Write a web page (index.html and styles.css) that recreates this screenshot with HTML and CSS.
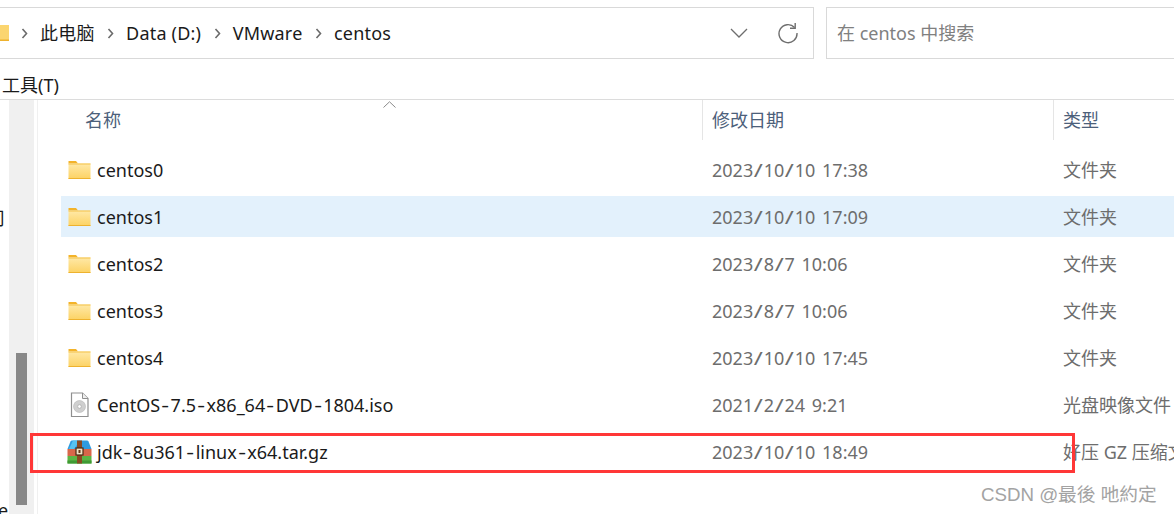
FILE: index.html
```html
<!DOCTYPE html>
<html lang="zh-CN">
<head>
  <meta charset="UTF-8">
  <title>centos</title>
  <link rel="stylesheet" href="styles.css">
</head>
<body>
  <div class="toolbar">
    <div class="address">
      <svg class="address-folder" width="12" height="16" viewBox="0 0 12 16"><rect x="-8" y="0" width="19" height="16" fill="#fbd56f"/><rect x="-8" y="14.5" width="19" height="1.5" fill="#eeb22e"/></svg>
      <svg class="crumb-sep" width="7" height="11" viewBox="0 0 7 11"><path d="M1.5 1 L5.5 5.5 L1.5 10" fill="none" stroke="#6b6b6b" stroke-width="1.6"/></svg>
      <span class="crumb">此电脑</span>
      <svg class="crumb-sep" width="7" height="11" viewBox="0 0 7 11"><path d="M1.5 1 L5.5 5.5 L1.5 10" fill="none" stroke="#6b6b6b" stroke-width="1.6"/></svg>
      <span class="crumb">Data (D:)</span>
      <svg class="crumb-sep" width="7" height="11" viewBox="0 0 7 11"><path d="M1.5 1 L5.5 5.5 L1.5 10" fill="none" stroke="#6b6b6b" stroke-width="1.6"/></svg>
      <span class="crumb">VMware</span>
      <svg class="crumb-sep" width="7" height="11" viewBox="0 0 7 11"><path d="M1.5 1 L5.5 5.5 L1.5 10" fill="none" stroke="#6b6b6b" stroke-width="1.6"/></svg>
      <span class="crumb">centos</span>
      <div class="address-actions">
        <svg width="18" height="10" viewBox="0 0 18 10"><path d="M1 1 L9 9 L17 1" fill="none" stroke="#6e6e6e" stroke-width="1.3"/></svg>
        <svg width="22" height="22" viewBox="0 0 22 22"><path d="M17.6 5.5 A9 9 0 1 0 20 11" fill="none" stroke="#6e6e6e" stroke-width="1.4"/><path d="M18.2 1 V6.2 H13" fill="none" stroke="#6e6e6e" stroke-width="1.4"/></svg>
      </div>
    </div>
    <div class="search">在 centos 中搜索</div>
  </div>

  <div class="menu">工具(T)</div>

  <div class="main">
    <div class="sidebar">
      <div class="side-strip">
        <div class="side-thumb"></div>
      </div>
      <span class="side-clip side-clip-top">司</span>
      <span class="side-clip side-clip-bottom">re</span>
    </div>

    <div class="list">
      <div class="list-head">
        <span class="head-name">名称</span>
        <span class="head-cell">修改日期</span>
        <span class="head-cell">类型</span>
        <svg class="sort-arrow" width="13" height="7" viewBox="0 0 13 7"><path d="M0.5 6.5 L6.5 0.8 L12.5 6.5" fill="none" stroke="#8a8a8a" stroke-width="1"/></svg>
      </div>

      <div class="row">
        <svg class="icon" width="23" height="18" viewBox="0 0 23 18"><use href="#folder"/></svg>
        <span class="name">centos0</span><span class="date">2023<i>/</i>10<i>/</i>10 17:38</span><span class="type">文件夹</span>
      </div>
      <div class="row row-active">
        <svg class="icon" width="23" height="18" viewBox="0 0 23 18"><use href="#folder"/></svg>
        <span class="name">centos1</span><span class="date">2023<i>/</i>10<i>/</i>10 17:09</span><span class="type">文件夹</span>
      </div>
      <div class="row">
        <svg class="icon" width="23" height="18" viewBox="0 0 23 18"><use href="#folder"/></svg>
        <span class="name">centos2</span><span class="date">2023<i>/</i>8<i>/</i>7 10:06</span><span class="type">文件夹</span>
      </div>
      <div class="row">
        <svg class="icon" width="23" height="18" viewBox="0 0 23 18"><use href="#folder"/></svg>
        <span class="name">centos3</span><span class="date">2023<i>/</i>8<i>/</i>7 10:06</span><span class="type">文件夹</span>
      </div>
      <div class="row">
        <svg class="icon" width="23" height="18" viewBox="0 0 23 18"><use href="#folder"/></svg>
        <span class="name">centos4</span><span class="date">2023<i>/</i>10<i>/</i>10 17:45</span><span class="type">文件夹</span>
      </div>
      <div class="row">
        <svg class="icon" width="23" height="26" viewBox="0 0 23 26">
          <path d="M3.5 1 H14.5 L20 6.5 V24.5 H3.5 Z" fill="#fff" stroke="#8f8f8f" stroke-width="1.2"/>
          <path d="M14.5 1 V6.5 H20" fill="#eee" stroke="#8f8f8f" stroke-width="1"/>
          <circle cx="11.5" cy="14.5" r="6" fill="#cfcfcf" stroke="#b5b5b5" stroke-width="0.6"/>
          <circle cx="11.5" cy="14.5" r="1.8" fill="#fff" stroke="#a0a0a0" stroke-width="0.6"/>
        </svg>
        <span class="name">CentOS<i>-</i>7.5<i>-</i>x86_64<i>-</i>DVD<i>-</i>1804.iso</span><span class="date">2021<i>/</i>2<i>/</i>24 9:21</span><span class="type">光盘映像文件</span>
      </div>
      <div class="row">
        <svg class="icon icon-zip" width="25" height="24" viewBox="0 0 25 24">
          <path d="M5 0.5 H20 Q21 0.5 21.500 1.500 L24.500 9 H0.500 L3.500 1.500 Q4 0.5 5 0.5 Z" fill="#2f9be0"/>
          <path d="M6 0.500 H13 L7 9 H2 Z" fill="#57c3f0"/>
          <rect x="0.500" y="9" width="24" height="7" fill="#d9674a"/>
          <rect x="0.500" y="16" width="24" height="7.500" fill="#5cb544"/>
          <rect x="0.500" y="20.500" width="24" height="3" fill="#3f9a34"/>
          <rect x="10" y="0.500" width="5" height="23" fill="#8a4a22"/>
          <rect x="9" y="8" width="7" height="7" fill="#f1e3c8" stroke="#4a2a12" stroke-width="1.200"/>
          <rect x="11.500" y="10" width="2" height="3" fill="#6b3a18"/>
        </svg>
        <span class="name">jdk<i>-</i>8u361<i>-</i>linux<i>-</i>x64.tar.gz</span><span class="date">2023<i>/</i>10<i>/</i>10 18:49</span><span class="type">好压 GZ 压缩文件</span>
      </div>
    </div>
  </div>

  <div class="red-mark"></div>
  <div class="watermark">CSDN @最後 吔約定</div>

  <svg class="defs" width="0" height="0">
    <defs>
      <linearGradient id="folderFill" x1="0" y1="0" x2="0" y2="1">
        <stop offset="0" stop-color="#ffe9a8"/>
        <stop offset="1" stop-color="#fcd263"/>
      </linearGradient>
      <g id="folder">
        <path d="M0.500 0 H8 L10 2.500 H0.500 Z" fill="#f3b32a"/>
        <rect x="0.500" y="2.500" width="22" height="15.500" fill="url(#folderFill)"/>
        <rect x="0.500" y="2.500" width="22" height="1" fill="#f3c14a"/>
        <rect x="0.500" y="17" width="22" height="1" fill="#eeb22e"/>
      </g>
    </defs>
  </svg>
</body>
</html>
```

FILE: styles.css
```css
html, body {
  height: 514px;
}
body {
  position: relative;
  margin: 0;
  overflow: hidden;
  background-color: #fff;
  color: #1a1a1a;
  font-family: "Noto Sans", "Noto Sans CJK SC", sans-serif;
  font-size: 18px;
}
.defs {
  position: absolute;
}

/* top bar */
.toolbar {
  display: flex;
  gap: 12px;
  padding-top: 7px;
}
.address {
  display: flex;
  flex: none;
  align-items: center;
  box-sizing: border-box;
  width: 816px;
  height: 52px;
  margin-left: -2px;
  padding-left: 2px;
  border: 1px solid #d9d9d9;
  border-left: none;
  white-space: nowrap;
}
.address-folder {
  flex: none;
  margin-left: -2px;
  margin-right: 11px;
}
.crumb-sep {
  flex: none;
  margin-top: 1px;
}
.crumb {
  margin: 0 12.5px 0 12px;
  letter-spacing: 0.2px;
  line-height: 1;
}
.address-actions {
  display: flex;
  align-items: center;
  gap: 29px;
  margin-left: auto;
  margin-right: 14px;
}
.search {
  flex: 1;
  box-sizing: border-box;
  height: 52px;
  margin-right: -2px;
  padding-left: 10px;
  border: 1px solid #d9d9d9;
  color: #808080;
  line-height: 50px;
}

/* menu row */
.menu {
  box-sizing: border-box;
  height: 41px;
  padding: 13px 0 0 2px;
  border-bottom: 1px solid #dcdcdc;
  line-height: 26px;
}

/* sidebar + file list */
.main {
  display: flex;
  height: 414px;
}
.sidebar {
  position: relative;
  flex: none;
  box-sizing: border-box;
  width: 38px;
  padding-left: 9px;
  border-right: 1px solid #f0f0f0;
}
.side-strip {
  box-sizing: border-box;
  width: 25px;
  height: 100%;
  padding: 253px 7px 9px;
  background-color: #f0f0f0;
}
.side-thumb {
  height: 152px;
  background-color: #888;
}
.side-clip {
  position: absolute;
  overflow: hidden;
  line-height: 20px;
}
.side-clip-top {
  top: 108px;
  left: -13px;
}
.side-clip-bottom {
  top: 400px;
  left: -9px;
}

.list {
  flex: 1;
  min-width: 0;
}
.list-head {
  position: relative;
  display: grid;
  grid-template-columns: 641px 351px 1fr;
  height: 49px;
  margin-left: 23px;
  color: #4c607a;
}
.head-name {
  height: 40px;
  padding-left: 24px;
  line-height: 41px;
}
.head-cell {
  height: 40px;
  padding-left: 9px;
  border-left: 1px solid #e5e5e5;
  line-height: 41px;
}
.sort-arrow {
  position: absolute;
  top: 1px;
  left: 322px;
}
.row {
  display: grid;
  grid-template-columns: 36px 615px 351px 1fr;
  align-items: center;
  height: 41px;
  margin-bottom: 6px;
  margin-left: 23px;
  white-space: nowrap;
}
.row-active {
  background-color: #e3f1fc;
}
.icon {
  margin-left: 7px;
}
.icon-zip {
  margin-left: 6px;
}
.date,
.type {
  color: #6d6d6d;
}
.date {
  word-spacing: 2px;
}
.type {
  margin-bottom: 2px;
}
/* slashes and hyphens run wider in the system font */
.row i {
  display: inline-block;
  width: 10.5px;
  font-style: normal;
  text-align: center;
  transform: scaleX(1.35);
}

/* overlays */
.red-mark {
  position: absolute;
  top: 433px;
  left: 30px;
  box-sizing: border-box;
  width: 1045px;
  height: 40px;
  border: 3px solid #ff3737;
}
.watermark {
  position: absolute;
  top: 483px;
  left: 981px;
  color: #a3a3a3;
  font-family: "Liberation Sans", "Noto Sans CJK SC", sans-serif;
  font-size: 18.7px;
  line-height: 24px;
  white-space: nowrap;
}
```
